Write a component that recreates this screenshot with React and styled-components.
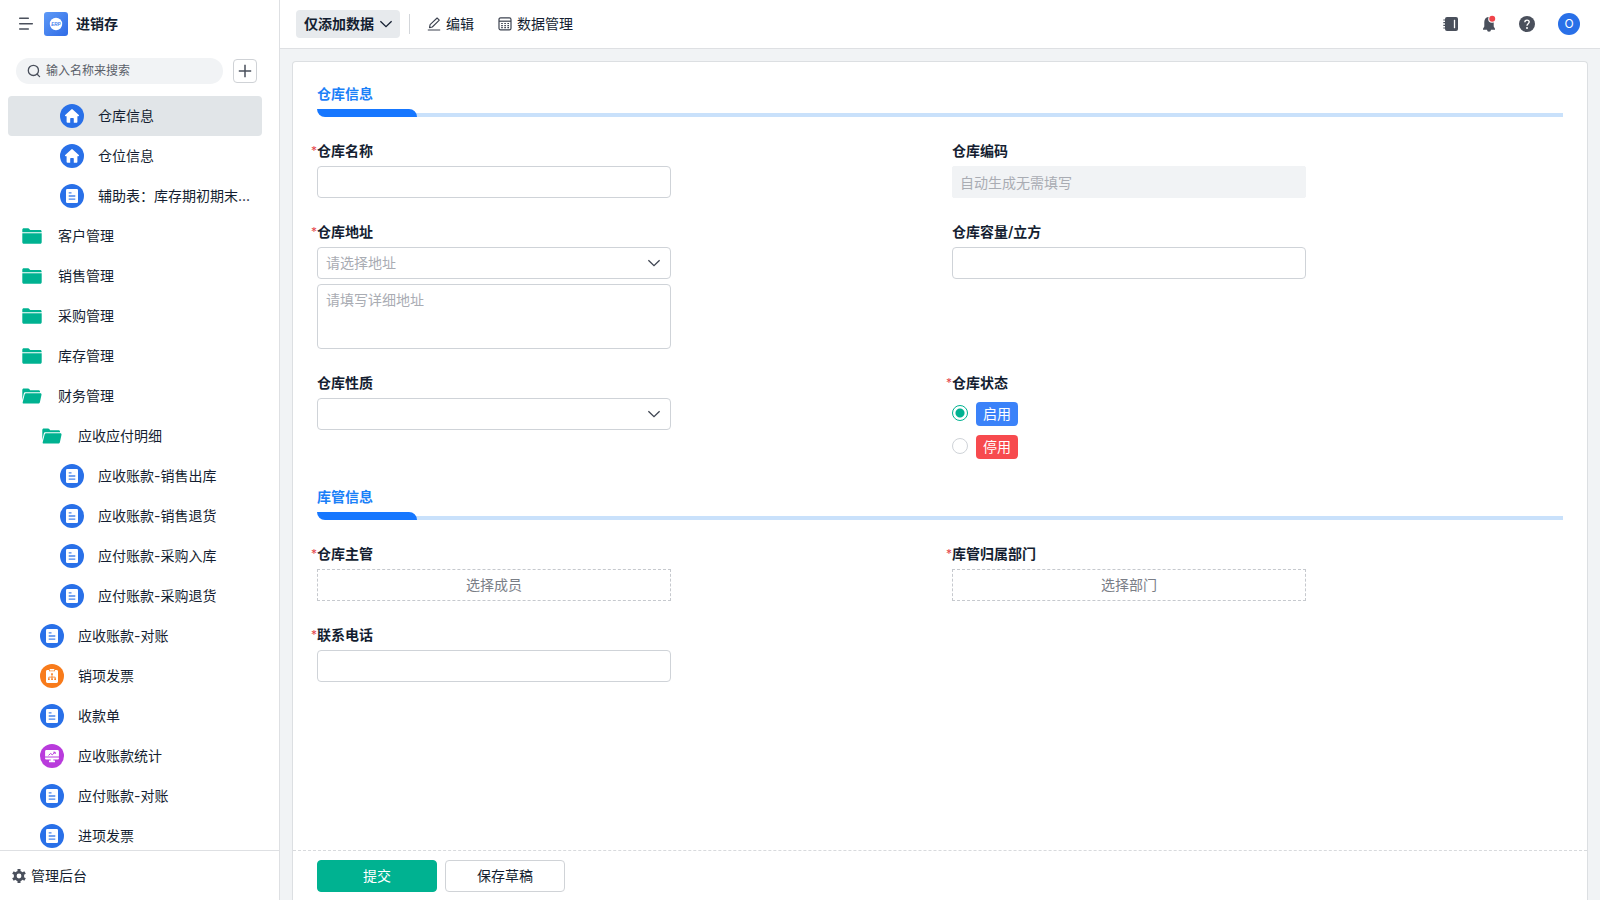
import React from "react";
import styled, { createGlobalStyle, css } from "styled-components";

const GlobalStyle = createGlobalStyle`
  *, *::before, *::after { box-sizing: border-box; }
  body {
    margin: 0;
    color: #141e31;
    background: #f1f3f5;
    font: 14px/20px Inter, "Noto Sans CJK SC", sans-serif;
  }
  button, input, select, textarea { font: inherit; color: inherit; }
  button { cursor: pointer; }
`;

/* ---------- shell ---------- */

const Shell = styled.div`
  display: flex;
  height: 100vh;
`;

const Sidebar = styled.aside`
  display: flex;
  flex-direction: column;
  flex: 0 0 280px;
  min-width: 0;
  min-height: 0;
  background: #fff;
  border-right: 1px solid #dee0e3;
`;

const Brand = styled.div`
  display: flex;
  align-items: center;
  height: 48px;
  padding: 0 16px;
`;

const PlainButton = styled.button`
  display: flex;
  flex: none;
  align-items: center;
  justify-content: center;
  width: ${(p) => p.$size}px;
  height: ${(p) => p.$size}px;
  padding: 0;
  border: 0;
  background: transparent;
  color: #4a505c;
`;

const Logo = styled.svg`
  width: 24px;
  height: 24px;
  margin: 0 8px;
`;

const BrandName = styled.h1`
  margin: 0;
  font-size: 14px;
  line-height: 20px;
  font-weight: 600;
`;

const SearchRow = styled.div`
  display: flex;
  align-items: center;
  gap: 10px;
  padding: 10px 22px 12px 16px;
`;

const SearchBox = styled.label`
  display: flex;
  align-items: center;
  gap: 5px;
  flex: 1;
  min-width: 0;
  height: 26px;
  padding: 0 11px;
  border-radius: 13px;
  background: #f1f3f5;
  color: #4a505c;
`;

const SearchInput = styled.input`
  flex: 1;
  min-width: 0;
  width: 100%;
  padding: 0;
  border: 0;
  outline: 0;
  background: transparent;
  font-size: 12px;
  line-height: 20px;
  &::placeholder { color: #5a5f69; opacity: 1; }
`;

const AddButton = styled(PlainButton)`
  border: 1px solid #cfd2d6;
  border-radius: 4px;
  background: #fff;
`;

const NavList = styled.nav`
  flex: 1;
  min-height: 0;
  overflow: hidden;
  padding: 0 17px 0 8px;
`;

const NavItem = styled.a`
  display: flex;
  align-items: center;
  gap: 14px;
  height: 40px;
  padding: 0 8px 0 ${(p) => 12 + p.$level * 20}px;
  border-radius: 4px;
  color: inherit;
  text-decoration: none;
  background: ${(p) => (p.$active ? "#e1e5e8" : "transparent")};
`;

const NavIcon = styled.svg`
  flex: none;
  width: 24px;
  height: 24px;
`;

const NavText = styled.span`
  white-space: nowrap;
`;

const SidebarFooter = styled.a`
  display: flex;
  align-items: center;
  gap: 4px;
  height: 50px;
  padding: 0 11px;
  border-top: 1px solid #dee0e3;
  color: inherit;
  text-decoration: none;
`;

const Main = styled.div`
  display: flex;
  flex-direction: column;
  flex: 1;
  min-width: 0;
`;

/* ---------- top bar ---------- */

const TopBar = styled.header`
  display: flex;
  align-items: center;
  justify-content: space-between;
  height: 49px;
  padding: 0 20px 0 16px;
  border-bottom: 1px solid #dee0e3;
  background: #fff;
`;

const BarGroup = styled.div`
  display: flex;
  align-items: center;
  gap: ${(p) => p.$gap}px;
`;

const ModeButton = styled.button`
  display: flex;
  align-items: center;
  gap: 5px;
  height: 28px;
  padding: 0 7px 0 8px;
  border: 0;
  border-radius: 4px;
  background: #e7eaed;
  font-weight: 600;
`;

const Divider = styled.span`
  width: 1px;
  height: 20px;
  margin: 0 16px 0 9px;
  background: #d3d6da;
`;

const BarAction = styled.button`
  display: flex;
  align-items: center;
  gap: 4px;
  height: 28px;
  margin-right: 23px;
  padding: 0;
  border: 0;
  background: transparent;
`;

const Avatar = styled.button`
  width: 22px;
  height: 22px;
  margin-left: 3px;
  padding: 0;
  border: 0;
  border-radius: 50%;
  background: #2970e8;
  color: #fff;
  font-size: 12px;
  line-height: 22px;
`;

/* ---------- form ---------- */

const Card = styled.form`
  display: flex;
  flex-direction: column;
  flex: 1;
  min-height: 0;
  margin: 12px 12px 0;
  border: 1px solid #dcdfe2;
  border-bottom: 0;
  border-radius: 4px 4px 0 0;
  background: #fff;
`;

const CardBody = styled.div`
  display: flex;
  flex-direction: column;
  flex: 1;
  gap: 24px;
  min-height: 0;
  padding: 22px 24px;
`;

const Section = styled.section`
  display: flex;
  flex-direction: column;
  gap: 24px;
`;

const SectionHead = styled.div`
  display: flex;
  flex-direction: column;
  gap: 5px;
`;

const SectionTitle = styled.h2`
  margin: 0;
  color: #1a80f8;
  font-size: 14px;
  line-height: 20px;
  font-weight: 600;
`;

const SectionRule = styled.div`
  height: 8px;
  background: linear-gradient(#fff, #fff) left / 50px 8px no-repeat,
    linear-gradient(#c9e1fb, #c9e1fb) bottom / 100% 4px no-repeat;
  &::before {
    content: "";
    display: block;
    width: 100px;
    height: 8px;
    border-radius: 0 8px 0 8px;
    background: #1677ff;
  }
`;

const FieldGrid = styled.div`
  display: grid;
  grid-template-columns: repeat(2, minmax(0, 1fr));
  gap: 24px;
`;

const FieldBox = styled.div`
  display: flex;
  flex-direction: column;
  gap: 5px;
  width: 100%;
  max-width: 354px;
  min-width: 0;
`;

const Label = styled.label`
  position: relative;
  align-self: flex-start;
  font-weight: 600;
  ${(p) =>
    p.$required &&
    css`
      &::before {
        content: "*";
        position: absolute;
        left: -6px;
        color: #e5484d;
        font-size: 12px;
        font-weight: 400;
      }
    `}
`;

const control = css`
  width: 100%;
  border: 1px solid #cfd3d8;
  border-radius: 4px;
  outline: 0;
  background: #fff;
  &::placeholder { color: #a9acb3; opacity: 1; }
`;

const TextInput = styled.input`
  ${control}
  height: 32px;
  padding: 0 7px;
  &:disabled {
    border-color: #f1f3f5;
    border-radius: 2px;
    background: #f1f3f5;
  }
`;

const TextArea = styled.textarea`
  ${control}
  display: block;
  height: 65px;
  padding: 5px 8px;
  resize: none;
`;

const SelectWrap = styled.div`
  position: relative;
  svg {
    position: absolute;
    top: 9px;
    right: 10px;
    pointer-events: none;
    color: #3d4350;
  }
`;

const Select = styled.select`
  ${control}
  display: block;
  height: 32px;
  padding: 0 30px 0 8px;
  appearance: none;
  color: #a9acb3;
`;

const Picker = styled.button`
  height: 32px;
  border: 1px dashed #c6c9ce;
  background: #fff;
  color: #7a7e87;
`;

const RadioList = styled.div`
  display: flex;
  flex-direction: column;
  gap: 1px;
`;

const RadioRow = styled.label`
  display: flex;
  align-items: center;
  gap: 8px;
  height: 32px;
`;

const Radio = styled.input`
  appearance: none;
  width: 16px;
  height: 16px;
  margin: 0 0 2px;
  border: 1px solid #cfd3d8;
  border-radius: 50%;
  background: #fff;
  &:checked {
    border-color: #00b291;
    background: radial-gradient(circle, #00b291 4px, #fff 5px);
  }
`;

const Tag = styled.span`
  height: 24px;
  padding: 0 7px;
  border-radius: 4px;
  background: ${(p) => p.$color};
  color: #fff;
  line-height: 24px;
`;

const CardFooter = styled.div`
  display: flex;
  gap: 8px;
  height: 50px;
  padding: 9px 24px;
  border-top: 1px dashed #d8dadd;
`;

const ActionButton = styled.button`
  width: 120px;
  height: 32px;
  padding: 0;
  border: 1px solid ${(p) => (p.$primary ? "#00b291" : "#d0d3d7")};
  border-radius: 4px;
  background: ${(p) => (p.$primary ? "#00b291" : "#fff")};
  color: ${(p) => (p.$primary ? "#fff" : "inherit")};
`;

/* ---------- icons ---------- */

const Chevron = () => (
  <svg width="14" height="14" viewBox="0 0 14 14" fill="none" stroke="currentColor" strokeWidth="1.3" aria-hidden="true">
    <path d="M1.400 4.200 7 9.600l5.600-5.400" />
  </svg>
);

const glyphs = {
  home: (
    <>
      <circle cx="12" cy="12" r="12" fill="#2970e8" />
      <path fill="#fff" d="M11.3 5.4a1 1 0 0 1 1.4 0l6.1 5.700c.5.5.2 1.200-.5 1.200h-.9v5.500c0 .6-.4 1-1 1h-2.600v-4.100a.7.7 0 0 0-.7-.7h-2.200a.7.7 0 0 0-.7.7v4.100H7.600a1 1 0 0 1-1-1v-5.500h-.9c-.7 0-1-.7-.5-1.200z" />
    </>
  ),
  doc: (
    <>
      <circle cx="12" cy="12" r="12" fill="#2970e8" />
      <rect x="6" y="5" width="12" height="14" rx="1.2" fill="#fff" />
      <path d="M8.700 8.800h2.800M8.700 12h6.600M8.700 15.200h6.600" stroke="#4a85eb" strokeWidth="1.300" />
    </>
  ),
  flow: (
    <>
      <circle cx="12" cy="12" r="12" fill="#f87b1b" />
      <path fill="#fff" d="M7.400 6H9v1.300h6V6h1.600c.8 0 1.400.6 1.400 1.400v10.200c0 .8-.6 1.400-1.400 1.400H7.400c-.8 0-1.400-.6-1.400-1.400V7.400C6 6.600 6.600 6 7.400 6z" />
      <path fill="#fff" d="M9.700 5h4.600v1.600H9.700z" />
      <path d="M12 10.500v4.500M8.800 15v-1.900h6.400V15" fill="none" stroke="#f87b1b" strokeWidth=".8" />
      <path fill="#f87b1b" d="M11.200 9.300h1.600v1.600h-1.600zM8 14.500h1.700v1.600H8zM11.200 14.500h1.700v1.600h-1.700zM14.300 14.500H16v1.600h-1.700z" />
    </>
  ),
  chart: (
    <>
      <circle cx="12" cy="12" r="12" fill="#b93bdc" />
      <path fill="#fff" d="M6.500 6h11c.8 0 1.400.6 1.400 1.400v5.200H5.100V7.400C5.100 6.600 5.700 6 6.500 6zM5.100 13.600h13.800v.8c0 .7-.6 1.200-1.300 1.200h-4.300v1h1.700v1.600H9v-1.600h1.700v-1H6.400c-.7 0-1.300-.5-1.300-1.200z" />
      <path d="m8.500 11.400 2.100-1.900 1.700 1.200 2.700-2.400M13.300 8.200h1.900V10" fill="none" stroke="#b93bdc" />
    </>
  ),
  folder: (
    <g fill="#00b291">
      <path d="M2.300 5.800c0-.9.600-1.500 1.500-1.500h4.300c.5 0 .9.200 1.200.6l.9 1.200h10c.8 0 1.400.6 1.400 1.400v.8H2.300z" />
      <path d="M2.300 9.200h19.400v9.100c0 .9-.6 1.500-1.500 1.500H3.800c-.9 0-1.500-.6-1.500-1.500z" />
    </g>
  ),
  folderOpen: (
    <g fill="#00b291">
      <path d="M2.300 6c0-.9.600-1.500 1.500-1.500h4.300c.5 0 .9.200 1.200.6l.8 1.100h8.500c.8 0 1.400.6 1.400 1.400v.7H5.400c-.8 0-1.400.5-1.600 1.200L2.300 16z" />
      <path d="M6 9.200h14.400c.8 0 1.300.7 1.100 1.500l-1.600 7.600c-.2.800-.8 1.300-1.600 1.300H3.700c-.8 0-1.200-.6-1-1.300l2-8.100c.2-.7.700-1 1.300-1z" />
    </g>
  ),
};

const navItems = [
  ["home", 2, "仓库信息"],
  ["home", 2, "仓位信息"],
  ["doc", 2, "辅助表：库存期初期末..."],
  ["folder", 0, "客户管理"],
  ["folder", 0, "销售管理"],
  ["folder", 0, "采购管理"],
  ["folder", 0, "库存管理"],
  ["folderOpen", 0, "财务管理"],
  ["folderOpen", 1, "应收应付明细"],
  ["doc", 2, "应收账款-销售出库"],
  ["doc", 2, "应收账款-销售退货"],
  ["doc", 2, "应付账款-采购入库"],
  ["doc", 2, "应付账款-采购退货"],
  ["doc", 1, "应收账款-对账"],
  ["flow", 1, "销项发票"],
  ["doc", 1, "收款单"],
  ["chart", 1, "应收账款统计"],
  ["doc", 1, "应付账款-对账"],
  ["doc", 1, "进项发票"],
];

/* ---------- composed parts ---------- */

const Field = ({ id, label, required, children }) => (
  <FieldBox>
    <Label htmlFor={id} $required={required}>{label}</Label>
    {children}
  </FieldBox>
);

const FormSection = ({ title, children }) => (
  <Section>
    <SectionHead>
      <SectionTitle>{title}</SectionTitle>
      <SectionRule />
    </SectionHead>
    <FieldGrid>{children}</FieldGrid>
  </Section>
);

const SideNav = () => (
  <Sidebar>
    <Brand>
      <PlainButton $size={20} type="button" aria-label="收起菜单">
        <svg width="20" height="20" viewBox="0 0 20 20" fill="none" stroke="currentColor" strokeWidth="1.500" strokeLinecap="round">
          <path d="M3.700 4.300h8.600M3.700 9.700h12.600M3.700 15h8.600" />
        </svg>
      </PlainButton>
      <Logo viewBox="0 0 24 24" aria-hidden="true">
        <defs>
          <linearGradient id="logoFill" x1="0" y1="0" x2="1" y2="1">
            <stop offset="0" stopColor="#5e9af7" />
            <stop offset="1" stopColor="#2f6be6" />
          </linearGradient>
        </defs>
        <rect width="24" height="24" rx="3" fill="url(#logoFill)" />
        <circle cx="12" cy="12" r="6.200" fill="#fff" />
        <text x="12" y="13.600" textAnchor="middle" fontFamily="Liberation Sans, sans-serif" fontSize="4.500" fontWeight="700" fontStyle="italic" fill="#3f7ced">ERP</text>
      </Logo>
      <BrandName>进销存</BrandName>
    </Brand>
    <SearchRow>
      <SearchBox>
        <svg width="14" height="14" viewBox="0 0 14 14" fill="none" stroke="currentColor" strokeWidth="1.300" strokeLinecap="round" aria-hidden="true">
          <circle cx="6.400" cy="6.400" r="5.100" />
          <path d="m10.200 10.200 2.400 2.400" />
        </svg>
        <SearchInput type="text" placeholder="输入名称来搜索" aria-label="搜索" />
      </SearchBox>
      <AddButton $size={24} type="button" aria-label="新建">
        <svg width="14" height="14" viewBox="0 0 14 14" stroke="currentColor" strokeWidth="1.500">
          <path d="M7 .8v12.400M.8 7h12.400" />
        </svg>
      </AddButton>
    </SearchRow>
    <NavList>
      {navItems.map(([icon, level, text], i) => (
        <NavItem key={text} href="#" $level={level} $active={i === 0}>
          <NavIcon viewBox="0 0 24 24" aria-hidden="true">{glyphs[icon]}</NavIcon>
          <NavText>{text}</NavText>
        </NavItem>
      ))}
    </NavList>
    <SidebarFooter href="#">
      <svg width="16" height="16" viewBox="0 0 16 16" fill="none" stroke="#4a505c" aria-hidden="true">
        <circle cx="8" cy="8" r="3.800" strokeWidth="2.800" />
        <path d="M8 1v2.500M8 12.500V15M1.940 4.500l2.160 1.250M11.900 10.250l2.160 1.250M1.940 11.500l2.160-1.250M11.900 5.750l2.160-1.250" strokeWidth="3" />
      </svg>
      管理后台
    </SidebarFooter>
  </Sidebar>
);

const Header = () => (
  <TopBar>
    <BarGroup $gap={0}>
      <ModeButton type="button">仅添加数据<Chevron /></ModeButton>
      <Divider />
      <BarAction type="button">
        <svg width="16" height="16" viewBox="0 0 16 16" fill="none" stroke="#3d4350" strokeWidth="1.100" strokeLinejoin="round" aria-hidden="true">
          <path d="m3.500 11.600.6-2.900 7-6.700 2.200 2.200-7 6.800zM1.800 14h12.400" />
        </svg>
        编辑
      </BarAction>
      <BarAction type="button">
        <svg width="16" height="16" viewBox="0 0 16 16" fill="none" stroke="#3d4350" strokeWidth="1.200" aria-hidden="true">
          <rect x="2" y="1.800" width="12" height="12" rx="1.600" />
          <path d="M2 5.200h12" />
          <path d="M4.200 7.500h7.800M4.200 9.600h7.800M4.200 11.700h7.800" strokeWidth="1.200" strokeDasharray="1.600 1.500" />
        </svg>
        数据管理
      </BarAction>
    </BarGroup>
    <BarGroup $gap={18}>
      <PlainButton $size={20} type="button" aria-label="通讯录">
        <svg width="18" height="18" viewBox="0 0 18 18" aria-hidden="true">
          <rect x="3" y="2" width="13" height="14" rx="2" fill="currentColor" />
          <path d="M1.300 5h2.700M1.300 7.700h2.700M1.300 10.300h2.700M1.300 13h2.700" stroke="currentColor" strokeWidth="1.200" />
          <path d="M12.500 4.800v8.400" stroke="#fff" strokeWidth="1.300" />
        </svg>
      </PlainButton>
      <PlainButton $size={20} type="button" aria-label="消息">
        <svg width="20" height="20" viewBox="0 0 20 20" aria-hidden="true">
          <path fill="currentColor" d="M10 3c-2.800 0-4.700 2-4.700 4.900v4.500L4 14.800v.9h4a2 2 0 0 0 4 0h4v-.9l-1.300-2.400V7.900C14.700 5 12.800 3 10 3z" />
          <circle cx="13" cy="5" r="3.800" fill="#fff" />
          <circle cx="13.200" cy="4.800" r="3" fill="#f0444a" />
        </svg>
      </PlainButton>
      <PlainButton $size={20} type="button" aria-label="帮助">
        <svg width="16" height="16" viewBox="0 0 16 16" fill="none" aria-hidden="true">
          <circle cx="8" cy="8" r="8" fill="currentColor" />
          <path d="M5.800 6.300C5.800 5 6.700 4.100 8 4.100s2.200.8 2.200 2c0 1.600-2.200 1.800-2.200 3.600" stroke="#fff" strokeWidth="1.400" />
          <circle cx="8" cy="12" r="1" fill="#fff" />
        </svg>
      </PlainButton>
      <Avatar type="button">O</Avatar>
    </BarGroup>
  </TopBar>
);

export default function App() {
  return (
    <>
      <GlobalStyle />
      <Shell>
        <SideNav />
        <Main>
          <Header />
          <Card onSubmit={(e) => e.preventDefault()}>
            <CardBody>
              <FormSection title="仓库信息">
                <Field id="name" label="仓库名称" required>
                  <TextInput id="name" />
                </Field>
                <Field id="code" label="仓库编码">
                  <TextInput id="code" placeholder="自动生成无需填写" disabled />
                </Field>
                <Field id="region" label="仓库地址" required>
                  <SelectWrap>
                    <Select id="region" defaultValue="">
                      <option value="">请选择地址</option>
                    </Select>
                    <Chevron />
                  </SelectWrap>
                  <TextArea placeholder="请填写详细地址" aria-label="详细地址" />
                </Field>
                <Field id="volume" label="仓库容量/立方">
                  <TextInput id="volume" />
                </Field>
                <Field id="kind" label="仓库性质">
                  <SelectWrap>
                    <Select id="kind" defaultValue="">
                      <option value="" />
                    </Select>
                    <Chevron />
                  </SelectWrap>
                </Field>
                <FieldBox role="radiogroup" aria-labelledby="status">
                  <Label as="span" id="status" $required>仓库状态</Label>
                  <RadioList>
                    <RadioRow>
                      <Radio type="radio" name="status" defaultChecked />
                      <Tag $color="#3b82f9">启用</Tag>
                    </RadioRow>
                    <RadioRow>
                      <Radio type="radio" name="status" />
                      <Tag $color="#f74a4e">停用</Tag>
                    </RadioRow>
                  </RadioList>
                </FieldBox>
              </FormSection>
              <FormSection title="库管信息">
                <Field id="manager" label="仓库主管" required>
                  <Picker id="manager" type="button">选择成员</Picker>
                </Field>
                <Field id="dept" label="库管归属部门" required>
                  <Picker id="dept" type="button">选择部门</Picker>
                </Field>
                <Field id="phone" label="联系电话" required>
                  <TextInput id="phone" type="tel" />
                </Field>
              </FormSection>
            </CardBody>
            <CardFooter>
              <ActionButton $primary type="submit">提交</ActionButton>
              <ActionButton type="button">保存草稿</ActionButton>
            </CardFooter>
          </Card>
        </Main>
      </Shell>
    </>
  );
}
